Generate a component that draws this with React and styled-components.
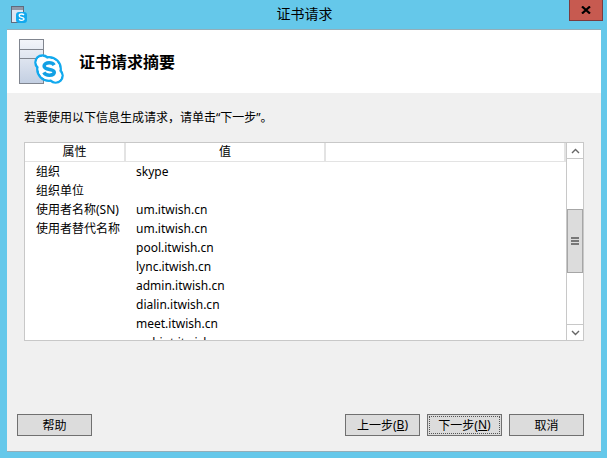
import React from 'react'
import styled, { createGlobalStyle } from 'styled-components'

const FONT = '"Noto Sans", "Noto Sans CJK SC", sans-serif'

const rows = [
   ['组织', 'skype'],
   ['组织单位', ''],
   ['使用者名称(SN)', 'um.itwish.cn'],
   ['使用者替代名称', 'um.itwish.cn'],
   ['', 'pool.itwish.cn'],
   ['', 'lync.itwish.cn'],
   ['', 'admin.itwish.cn'],
   ['', 'dialin.itwish.cn'],
   ['', 'meet.itwish.cn'],
   ['', 'webint.itwish.cn'],
]

const SkypeBadge = ({ size }) => (
   <svg width={size} height={size} viewBox="0 0 32 32">
      <circle cx="9" cy="9" r="7.5" fill="#fff" stroke="#12a9ee" strokeWidth="2.6" />
      <circle cx="23" cy="23" r="7.5" fill="#fff" stroke="#12a9ee" strokeWidth="2.6" />
      <circle cx="16" cy="16" r="12.5" fill="#fff" stroke="#12a9ee" strokeWidth="2.6" />
      <circle cx="9" cy="9" r="6.2" fill="#fff" />
      <circle cx="23" cy="23" r="6.2" fill="#fff" />
      <circle cx="16" cy="16" r="11.2" fill="#fff" />
      <path d="M21.500 11.800c-1-1.700-3-2.500-5.400-2.500-3 0-5.300 1.400-5.300 3.600 0 5 10.800 2.500 10.800 6.600 0 2-2.200 3.100-5.200 3.100-2.700 0-4.800-1-5.900-3" fill="none" stroke="#12a0e4" strokeWidth="3.800" />
   </svg>
)

const TitleIcon = () => (
   <svg width="16" height="18" viewBox="0 0 16 18">
      <rect x="0.500" y="0.500" width="12" height="16" fill="#dfe6f2" stroke="#5f6a7c" />
      <rect x="1" y="1" width="11" height="3" fill="#8f98a8" />
      <rect x="5" y="6" width="11" height="11" rx="3" fill="#12a9ee" />
      <path d="M13 9c-.6-.8-1.600-1-2.500-1-1.300 0-2.300.6-2.300 1.700 0 2.200 4.800 1.100 4.800 3.100 0 1-1 1.500-2.400 1.500-1.100 0-2-.4-2.500-1.200" fill="none" stroke="#fff" strokeWidth="1.300" />
   </svg>
)

const ServerArt = () => (
   <svg width="46" height="46" viewBox="0 0 46 46">
      <defs>
         <linearGradient id="serverFill" x1="0" y1="0" x2="0" y2="1">
            <stop offset="0" stopColor="#f3f5fa" />
            <stop offset="1" stopColor="#c3cfe2" />
         </linearGradient>
      </defs>
      <rect x="0.500" y="0.500" width="24" height="44" fill="url(#serverFill)" stroke="#80858f" />
      <path d="M1 10.500h23M1 19.500h23" stroke="#80858f" />
   </svg>
)

export default function App() {
   return (
      <>
         <GlobalStyle />
         <Window>
            <TitleBar>
               <TitleIconSlot><TitleIcon /></TitleIconSlot>
               <TitleText>证书请求</TitleText>
               <CloseButton>
                  <svg width="10" height="8" viewBox="0 0 10 8">
                     <path d="M1 0.500l8 7M9 0.500l-8 7" stroke="#000" strokeWidth="2.200" />
                  </svg>
               </CloseButton>
            </TitleBar>
            <Client>
               <Header>
                  <ArtSlot>
                     <ServerArt />
                     <BadgeSlot><SkypeBadge size={30} /></BadgeSlot>
                  </ArtSlot>
                  <Heading>证书请求摘要</Heading>
               </Header>
               <Body>
                  <Intro>若要使用以下信息生成请求，请单击“下一步”。</Intro>
                  <ListView>
                     <ListMain>
                        <ColumnRow>
                           <Column $width={101}>属性</Column>
                           <Column $width={200}>值</Column>
                           <Column $grow />
                        </ColumnRow>
                        <ListRows>
                           {rows.map(([name, value], i) => (
                              <Row key={i}>
                                 <NameCell>{name}</NameCell>
                                 <ValueCell>{value}</ValueCell>
                              </Row>
                           ))}
                        </ListRows>
                     </ListMain>
                     <ScrollBar>
                        <ScrollButton>
                           <svg width="9" height="6" viewBox="0 0 9 6">
                              <path d="M1 5l3.500-3.500L8 5" fill="none" stroke="#666" strokeWidth="1.400" />
                           </svg>
                        </ScrollButton>
                        <Track $height={50} />
                        <Thumb>
                           <Grip /><Grip /><Grip />
                        </Thumb>
                        <Track $grow />
                        <ScrollButton $bottom>
                           <svg width="9" height="6" viewBox="0 0 9 6">
                              <path d="M1 1l3.500 3.500L8 1" fill="none" stroke="#666" strokeWidth="1.400" />
                           </svg>
                        </ScrollButton>
                     </ScrollBar>
                  </ListView>
                  <Footer>
                     <Button>帮助</Button>
                     <FooterRight>
                        <Button>上一步(<u>B</u>)</Button>
                        <Button $focused>下一步(<u>N</u>)</Button>
                        <Button>取消</Button>
                     </FooterRight>
                  </Footer>
               </Body>
            </Client>
         </Window>
      </>
   )
}

const GlobalStyle = createGlobalStyle`
   html, body {
      margin: 0;
      padding: 0;
      background: #65c8ea;
   }
`

const Window = styled.div`
   width: 607px;
   height: 458px;
   box-sizing: border-box;
   padding: 0 6px 7px 7px;
   display: flex;
   flex-direction: column;
   background: #65c8ea;
   font-family: ${FONT};
   color: #000;
   overflow: hidden;
`

const TitleBar = styled.div`
   height: 30px;
   flex: none;
   display: flex;
   align-items: flex-start;
`

const TitleIconSlot = styled.div`
   width: 16px;
   height: 18px;
   margin: 6px 0 0 4px;
   flex: none;
`

const TitleText = styled.div`
   flex: 1;
   text-align: center;
   font-size: 14px;
   line-height: 28px;
   padding-left: 13px;
`

const CloseButton = styled.div`
   width: 34px;
   height: 21px;
   box-sizing: border-box;
   margin-right: -2px;
   flex: none;
   display: flex;
   align-items: center;
   justify-content: center;
   background: #c75a50;
   border: 1px solid #7a3b3f;
   border-top: none;
`

const Client = styled.div`
   flex: 1;
   display: flex;
   flex-direction: column;
   background: #f0f0f0;
   min-height: 0;
   box-shadow: 0 -1px 0 #93aeb9, 0 1px 0 #93aeb9;
`

const Header = styled.div`
   height: 63px;
   flex: none;
   display: flex;
   align-items: center;
   background: #fff;
`

const ArtSlot = styled.div`
   position: relative;
   width: 46px;
   height: 46px;
   margin: 0 0 0 12px;
   flex: none;
`

const BadgeSlot = styled.div`
   position: absolute;
   left: 15px;
   top: 15px;
`

const Heading = styled.h1`
   margin: 0 0 0 14px;
   font-size: 16px;
   font-weight: 700;
   line-height: 22px;
`

const Body = styled.div`
   flex: 1;
   display: flex;
   flex-direction: column;
   padding: 0 10px 0 10px;
   min-height: 0;
`

const Intro = styled.div`
   font-size: 12px;
   line-height: 18px;
   padding: 16px 0 0 7px;
   height: 33px;
   box-sizing: border-box;
   flex: none;
   white-space: nowrap;
`

const ListView = styled.div`
   width: 560px;
   height: 199px;
   box-sizing: border-box;
   margin: 16px 0 0 7px;
   flex: none;
   display: flex;
   background: #fff;
   border: 1px solid #c8c8c8;
`

const ListMain = styled.div`
   flex: 1;
   min-width: 0;
   display: flex;
   flex-direction: column;
`

const ColumnRow = styled.div`
   height: 18px;
   flex: none;
   display: flex;
   border-bottom: 1px solid #e3e3e3;
`

const Column = styled.div`
   width: ${p => (p.$grow ? 'auto' : `${p.$width}px`)};
   flex: ${p => (p.$grow ? 1 : 'none')};
   box-sizing: border-box;
   text-align: center;
   font-size: 12px;
   line-height: 18px;
   border-right: 2px solid #e3e3e3;
`

const ListRows = styled.div`
   flex: 1;
   min-height: 0;
   overflow: hidden;
`

const Row = styled.div`
   height: 19px;
   display: flex;
   font-size: 12px;
   line-height: 19px;
`

const NameCell = styled.div`
   width: 100px;
   flex: none;
   box-sizing: border-box;
   padding-left: 11px;
   white-space: nowrap;
`

const ValueCell = styled.div`
   padding-left: 11px;
   white-space: nowrap;
`

const ScrollBar = styled.div`
   width: 17px;
   flex: none;
   box-sizing: border-box;
   display: flex;
   flex-direction: column;
   border-left: 1px solid #c8c8c8;
`

const ScrollButton = styled.div`
   height: 15px;
   flex: none;
   display: flex;
   align-items: center;
   justify-content: center;
   border-bottom: ${p => (p.$bottom ? 'none' : '1px solid #c8c8c8')};
   border-top: ${p => (p.$bottom ? '1px solid #c8c8c8' : 'none')};
`

const Track = styled.div`
   height: ${p => (p.$grow ? 'auto' : `${p.$height}px`)};
   flex: ${p => (p.$grow ? 1 : 'none')};
`

const Thumb = styled.div`
   height: 64px;
   flex: none;
   box-sizing: border-box;
   display: flex;
   flex-direction: column;
   align-items: center;
   justify-content: center;
   gap: 1px;
   background: #dcdcdc;
   border: 1px solid #a6a6a6;
`

const Grip = styled.div`
   width: 8px;
   height: 2px;
   background: #777;
`

const Footer = styled.div`
   display: flex;
   justify-content: space-between;
   margin-top: 73px;
   width: 567px;
`

const FooterRight = styled.div`
   display: flex;
   gap: 7px;
`

const Button = styled.div`
   position: relative;
   width: 75px;
   height: 22px;
   box-sizing: border-box;
   padding-bottom: 1px;
   display: flex;
   align-items: center;
   justify-content: center;
   font-size: 12px;
   background: #dcdcdc;
   border: 1px solid #707070;
   u {
      text-decoration: underline;
   }
   ${p => p.$focused && `
      outline: 1px dotted #555;
      outline-offset: -3px;
   `}
`
